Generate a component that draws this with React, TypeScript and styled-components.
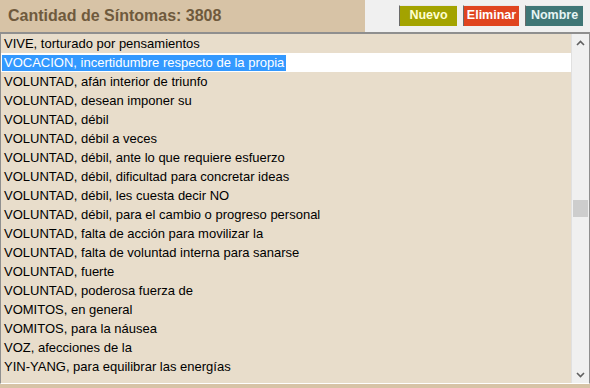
import * as React from 'react';
import styled, { createGlobalStyle } from 'styled-components';

const GlobalStyle = createGlobalStyle`
    html, body {
        margin: 0;
        padding: 0;
        background: #f0f0f0;
    }
`;

const Page = styled.div`
    width: 590px;
    height: 388px;
    display: flex;
    flex-direction: column;
    font-family: "Liberation Sans", Arial, sans-serif;
    background: #d7c3a6;
    overflow: hidden;
`;

const Header = styled.div`
    display: flex;
    height: 32px;
    flex-shrink: 0;
`;

const Title = styled.div`
    width: 365px;
    display: flex;
    align-items: center;
    padding-left: 8px;
    box-sizing: border-box;
    background: #d7c3a6;
    color: #6f5a3d;
    font-size: 16px;
    font-weight: bold;
`;

const Toolbar = styled.div`
    flex: 1;
    display: flex;
    align-items: flex-start;
    justify-content: flex-end;
    gap: 6px;
    padding: 5px 7px 0 0;
    background: #f0f0f0;
`;

const ToolButton = styled.button<{ $bg: string; $fg: string; $w: number }>`
    width: ${p => p.$w}px;
    height: 21px;
    padding: 0 0 2px;
    border: none;
    border-top: 1px solid #e8e8e8;
    border-left: 1px solid #6a6a6a;
    background: ${p => p.$bg};
    color: ${p => p.$fg};
    font-family: "Liberation Sans", Arial, sans-serif;
    font-size: 12.5px;
    font-weight: bold;
    cursor: pointer;
`;

const ListBox = styled.div`
    height: 352px;
    display: flex;
    flex-shrink: 0;
    border-top: 2px solid #8f8f8f;
    border-left: 1px solid #8f8f8f;
    border-right: 1px solid #8f8f8f;
    border-bottom: 1px solid #ffffff;
    box-sizing: border-box;
    background: #e8ddcb;
`;

const Rows = styled.div`
    flex: 1;
    overflow: hidden;
`;

const Row = styled.div<{ $selected?: boolean }>`
    height: 19px;
    display: flex;
    align-items: center;
    padding: 1px 0 0 1px;
    box-sizing: border-box;
    background: ${p => (p.$selected ? '#ffffff' : 'transparent')};
    font-size: 13px;
    color: #000;
    white-space: nowrap;
`;

const RowText = styled.span<{ $selected?: boolean }>`
    display: inline-block;
    height: 16px;
    line-height: 16px;
    padding: 0 2px;
    background: ${p => (p.$selected ? '#3399ff' : 'transparent')};
    color: ${p => (p.$selected ? '#ffffff' : '#000000')};
`;

const ScrollBar = styled.div`
    width: 17px;
    display: flex;
    flex-direction: column;
    background: #f0f0f0;
    border-left: 1px solid #e0e0e0;
`;

const ScrollArrow = styled.div`
    height: 17px;
    display: flex;
    align-items: center;
    justify-content: center;
`;

const Track = styled.div`
    flex: 1;
    position: relative;
`;

const Thumb = styled.div`
    position: absolute;
    left: 1px;
    right: 1px;
    height: 17px;
    background: #cdcdcd;
`;

const symptoms = [
    "VIVE, torturado por pensamientos",
    "VOCACION, incertidumbre respecto de la propia",
    "VOLUNTAD, afán interior de triunfo",
    "VOLUNTAD, desean imponer su",
    "VOLUNTAD, débil",
    "VOLUNTAD, débil a veces",
    "VOLUNTAD, débil, ante lo que requiere esfuerzo",
    "VOLUNTAD, débil, dificultad para concretar ideas",
    "VOLUNTAD, débil, les cuesta decir NO",
    "VOLUNTAD, débil, para el cambio o progreso personal",
    "VOLUNTAD, falta de acción para movilizar la",
    "VOLUNTAD, falta de voluntad interna para sanarse",
    "VOLUNTAD, fuerte",
    "VOLUNTAD, poderosa fuerza de",
    "VOMITOS, en general",
    "VOMITOS, para la náusea",
    "VOZ, afecciones de la",
    "YIN-YANG, para equilibrar las energías",
];

const Chevron = function (props: { up?: boolean })
{
    return (<svg width="9" height="6" viewBox="0 0 9 6">
        <path d={props.up ? "M1 5 L4.5 1.5 L8 5" : "M1 1 L4.5 4.5 L8 1"} fill="none" stroke="#606060" strokeWidth="1.6" />
    </svg>);
};

export default function App()
{
    const [selected, setSelected] = React.useState(1);

    return (<>
        <GlobalStyle />
        <Page>
            <Header>
                <Title>Cantidad de Síntomas: 3808</Title>
                <Toolbar>
                    <ToolButton $w={58} $bg="#a3a300" $fg="#ffffd0">Nuevo</ToolButton>
                    <ToolButton $w={56} $bg="#e0441f" $fg="#ffffff">Eliminar</ToolButton>
                    <ToolButton $w={58} $bg="#3f7676" $fg="#e6f4f4">Nombre</ToolButton>
                </Toolbar>
            </Header>
            <ListBox>
                <Rows>
                    {symptoms.map((s, i) => (
                        <Row key={s} $selected={i === selected} onClick={() => setSelected(i)}>
                            <RowText $selected={i === selected}>{s}</RowText>
                        </Row>
                    ))}
                </Rows>
                <ScrollBar>
                    <ScrollArrow><Chevron up /></ScrollArrow>
                    <Track><Thumb style={{ top: 149 }} /></Track>
                    <ScrollArrow><Chevron /></ScrollArrow>
                </ScrollBar>
            </ListBox>
        </Page>
    </>);
}
